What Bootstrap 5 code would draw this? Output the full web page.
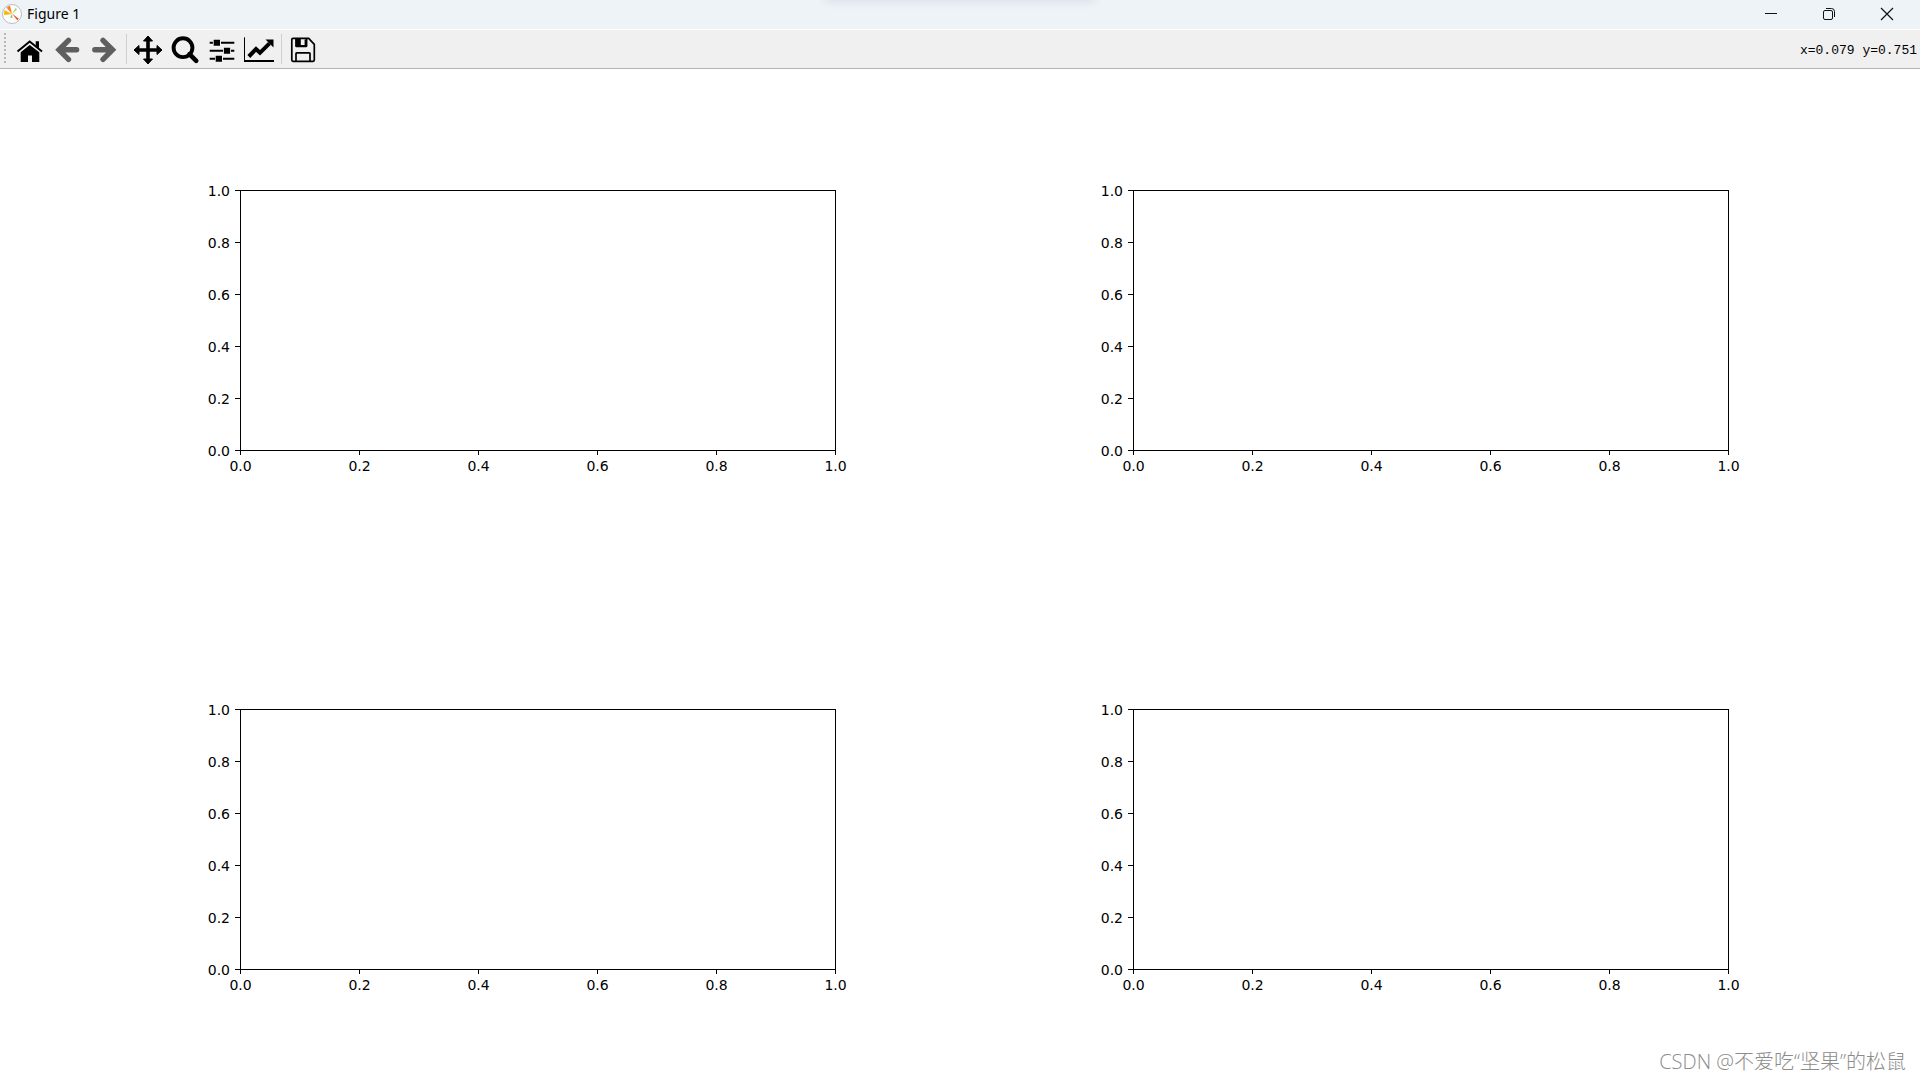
<!DOCTYPE html>
<html lang="en">
<head>
<meta charset="utf-8">
<meta name="viewport" content="width=device-width, initial-scale=1">
<title>Figure 1</title>
<link href="https://cdn.jsdelivr.net/npm/bootstrap@5.3.0/dist/css/bootstrap.min.css" rel="stylesheet">
<style>
  body { background: #fff; color: #000; }
  .title-bar { height: 29px; padding-bottom: 1px; background: #eef3f8; box-shadow: 0 1px 0 #fff; }
  .app-icon { margin: 0 3px 0 1px; }
  .title-text { font: 14px/20px "Noto Sans", "Open Sans", sans-serif; }
  .snap-hint { left: 43%; right: 43%; top: -4px; height: 4px; box-shadow: 0 0 10px 1px rgba(70, 60, 90, .14); }
  .win-btn { width: 58px; height: 28px; }
  .tool-bar { height: 40px; padding-top: 1px; background: #f0f0f0; border-bottom: 1px solid #b4b4b4; }
  .tool-grip { width: 2px; height: 32px; margin: 0 6px 0 4px; background: repeating-linear-gradient(#b8b8b8 0 2px, transparent 2px 4px); }
  .tool-btn { width: 37px; height: 38px; }
  .tool-sep { width: 1px; height: 30px; margin: 0 3px; background: #cfcfcf; }
  .coords { padding: 4px 3px 0 0; font: 13px/16px "Liberation Mono", monospace; white-space: pre; }

  .figure-grid {
    display: grid;
    grid-template-columns: 240fr 596fr 297fr 596fr 191fr;
    grid-template-rows: 121fr 261fr 258fr 261fr 110fr;
    font: 14px/17px "DejaVu Sans", sans-serif;
  }
  .plot-area { border: 1px solid #000; }
  .col-a { grid-column: 2; } .col-b { grid-column: 4; }
  .row-a { grid-row: 2; } .row-b { grid-row: 4; }
  .y-axis.col-a { grid-column: 1; } .y-axis.col-b { grid-column: 3; }
  .x-axis.row-a { grid-row: 3; } .x-axis.row-b { grid-row: 5; }
  .y-axis { line-height: 18px; }
  .y-axis > span { height: 1px; display: flex; align-items: center; justify-content: flex-end; gap: 5px; }
  .y-axis > span::after { content: ""; width: 5px; height: 1px; background: #000; }
  .x-axis > span { width: 1px; display: flex; flex-direction: column; align-items: center; gap: 3px; }
  .x-axis > span::before { content: ""; width: 1px; height: 4px; background: #000; }
  .watermark { right: 14px; bottom: 3px; color: #8c8c8c; font: 300 20px/30px "Open Sans", "Noto Sans CJK SC", sans-serif; }
</style>
<script src="https://cdn.jsdelivr.net/npm/bootstrap@5.3.0/dist/js/bootstrap.bundle.min.js"></script>
</head>
<body>
<div class="d-flex flex-column vh-100 position-relative overflow-hidden">
  <header class="title-bar d-flex align-items-center flex-shrink-0 position-relative">
    <div class="snap-hint position-absolute"></div>
    <svg class="app-icon" width="23" height="24" viewBox="1 2 23 24" aria-hidden="true">
      <circle cx="12" cy="14" r="9.5" fill="#fff" stroke="#b9bcc4"/>
      <path d="M12 14 6.500 7.500l3.500-2z" fill="#ff7a22"/>
      <path d="M12 14 4 15l.3-5z" fill="#f5b800"/>
      <path d="m12 14 3.500-6 1.600 1.200z" fill="#9bdc4b"/>
      <path d="m12 14 .5 4-2.300-.5z" fill="#7cc95c"/>
      <path d="m12 13.500 6.800 5.300-1.500 1.800z" fill="#f05a1a"/>
    </svg>
    <span class="title-text">Figure 1</span>
    <div class="d-flex ms-auto me-1">
      <button class="win-btn btn p-0 border-0 rounded-0 d-flex align-items-center justify-content-center" type="button" aria-label="Minimize">
        <svg width="14" height="14" fill="none" stroke="#111"><path d="M1 6.500h12"/></svg>
      </button>
      <button class="win-btn btn p-0 border-0 rounded-0 d-flex align-items-center justify-content-center" type="button" aria-label="Restore">
        <svg width="14" height="14" fill="none" stroke="#111"><rect x="1.500" y="3.500" width="9" height="9" rx="1.500"/><path d="M4 1.500h5.500a3 3 0 0 1 3 3V10"/></svg>
      </button>
      <button class="win-btn btn p-0 border-0 rounded-0 d-flex align-items-center justify-content-center" type="button" aria-label="Close">
        <svg width="14" height="14" fill="none" stroke="#111" stroke-width="1.200"><path d="m1 1 12 12M13 1 1 13"/></svg>
      </button>
    </div>
  </header>

  <nav class="tool-bar d-flex align-items-center flex-shrink-0" aria-label="Figure tools">
    <span class="tool-grip"></span>
    <button class="tool-btn btn p-0 border-0 rounded-0 d-flex" type="button" aria-label="Home">
      <svg width="37" height="38"><path d="m5.500 21.500 12.200-10 12.300 10" fill="none" stroke="#000" stroke-width="2"/><path d="M23.700 11.300H27v7l-3.300-2.600zM8.700 22.300l9-7.300 9.600 7.300V32H20v-6.500h-4V32H8.700z"/></svg>
    </button>
    <button class="tool-btn btn p-0 border-0 rounded-0 d-flex" type="button" aria-label="Back">
      <svg width="37" height="38" fill="none" stroke="#5f5f5f" stroke-width="5.400" stroke-linecap="round"><path d="m19.500 10.300-9.500 9.500 9.500 9.500M11 19.800h16.600"/></svg>
    </button>
    <button class="tool-btn btn p-0 border-0 rounded-0 d-flex" type="button" aria-label="Forward">
      <svg width="37" height="38" fill="none" stroke="#5f5f5f" stroke-width="5.400" stroke-linecap="round"><path d="m17 10.300 9.500 9.500-9.500 9.500M25.500 19.800H8.800"/></svg>
    </button>
    <span class="tool-sep"></span>
    <button class="tool-btn btn p-0 border-0 rounded-0 d-flex" type="button" aria-label="Pan">
      <svg width="37" height="38"><path d="M18 8v24M6 20h24" stroke="#000" stroke-width="3.600"/><path d="m18 6 4.500 5h-9zM18 34l4.500-5h-9zM4 20l5-4.500v9zM32 20l-5-4.500v9z" stroke="#000" stroke-linejoin="round"/></svg>
    </button>
    <button class="tool-btn btn p-0 border-0 rounded-0 d-flex" type="button" aria-label="Zoom">
      <svg width="37" height="38" fill="none" stroke="#000"><circle cx="16" cy="17.700" r="9.400" stroke-width="3.900"/><path d="m22.500 24.200 6.700 6.600" stroke-width="4.600" stroke-linecap="round"/></svg>
    </button>
    <button class="tool-btn btn p-0 border-0 rounded-0 d-flex" type="button" aria-label="Configure subplots">
      <svg width="37" height="38"><path d="M5.700 12.700h3.200M17 12.700h13.300M5.700 20.700H19M27 20.700h3.300M5.700 28.700H11M19 28.700h11.300" stroke="#000" stroke-width="2"/><path d="M9.700 9.700H16v6H9.700zM19.900 17.700h6.200v6h-6.200zM11.700 25.700H18v6h-6.300z"/></svg>
    </button>
    <button class="tool-btn btn p-0 border-0 rounded-0 d-flex" type="button" aria-label="Edit axes">
      <svg width="37" height="38"><path d="M3.500 7.300V31" stroke="#000"/><path d="M3 31h30" stroke="#000" stroke-width="2"/><path d="m7.800 26.500 7.200-7.500 4 3.800 9.500-9.500" fill="none" stroke="#000" stroke-width="4"/><path d="M24.500 9.500h8v8z"/></svg>
    </button>
    <span class="tool-sep"></span>
    <button class="tool-btn btn p-0 border-0 rounded-0 d-flex" type="button" aria-label="Save">
      <svg width="37" height="38"><path d="M8 8.300h15.700l5.600 6V30q0 1.300-1.300 1.300H8q-1.200 0-1.200-1.300V9.500Q6.800 8.300 8 8.300zM11 31v-7.500q0-.7.700-.7h12.600q.7 0 .7.700V31M11 8.500V16q0 .5.500.5H21q.6 0 .6-.5V8.500" fill="none" stroke="#000" stroke-width="1.700"/><path d="M10.800 8.500h5v8h-5zM19.600 9.500H22V16h-2.400zM15 15h6v1.500h-6z"/></svg>
    </button>
    <output class="coords ms-auto">x=0.079 y=0.751</output>
  </nav>

  <main class="figure-grid flex-grow-1">
    <div class="y-axis col-a row-a d-flex flex-column justify-content-between"><span>1.0</span><span>0.8</span><span>0.6</span><span>0.4</span><span>0.2</span><span>0.0</span></div>
    <div class="plot-area col-a row-a"></div>
    <div class="x-axis col-a row-a d-flex justify-content-between"><span>0.0</span><span>0.2</span><span>0.4</span><span>0.6</span><span>0.8</span><span>1.0</span></div>

    <div class="y-axis col-b row-a d-flex flex-column justify-content-between"><span>1.0</span><span>0.8</span><span>0.6</span><span>0.4</span><span>0.2</span><span>0.0</span></div>
    <div class="plot-area col-b row-a"></div>
    <div class="x-axis col-b row-a d-flex justify-content-between"><span>0.0</span><span>0.2</span><span>0.4</span><span>0.6</span><span>0.8</span><span>1.0</span></div>

    <div class="y-axis col-a row-b d-flex flex-column justify-content-between"><span>1.0</span><span>0.8</span><span>0.6</span><span>0.4</span><span>0.2</span><span>0.0</span></div>
    <div class="plot-area col-a row-b"></div>
    <div class="x-axis col-a row-b d-flex justify-content-between"><span>0.0</span><span>0.2</span><span>0.4</span><span>0.6</span><span>0.8</span><span>1.0</span></div>

    <div class="y-axis col-b row-b d-flex flex-column justify-content-between"><span>1.0</span><span>0.8</span><span>0.6</span><span>0.4</span><span>0.2</span><span>0.0</span></div>
    <div class="plot-area col-b row-b"></div>
    <div class="x-axis col-b row-b d-flex justify-content-between"><span>0.0</span><span>0.2</span><span>0.4</span><span>0.6</span><span>0.8</span><span>1.0</span></div>
  </main>
  <div class="watermark position-absolute">CSDN @不爱吃“坚果”的松鼠</div>
</div>
</body>
</html>
